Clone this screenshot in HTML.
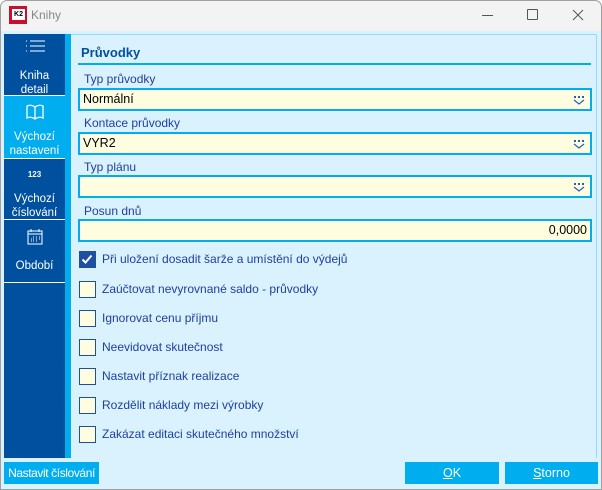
<!DOCTYPE html>
<html><head><meta charset="utf-8"><style>
*{margin:0;padding:0;box-sizing:border-box}
body{width:602px;height:490px;overflow:hidden;background:#fff;font-family:"Liberation Sans",sans-serif;position:relative}
.abs{position:absolute}
#win{left:0;top:0;width:602px;height:490px;background:#d9f2fe;border-radius:7px 7px 0 0;overflow:hidden}
#frame{left:0;top:0;width:602px;height:490px;border:1px solid #a0a0a0;border-radius:7px 7px 0 0;pointer-events:none}
#title{left:0;top:0;width:602px;height:31px;background:#f3f3f3}
.side{left:4px;width:61px;background:#0050a0;color:#fff;font-size:11.5px;text-align:center;line-height:14px}
.lbl{font-size:12px;color:#1f3fa0;left:84px}
.inp{left:78px;width:514px;height:23px;background:#fffde0;border:2px solid #00aeef;font-size:12.5px;color:#000;padding-left:3px;line-height:19px}
.cb{left:79px;width:17px;height:17px;background:#fffde0;border:1.5px solid #1f4f9f}
.ct{left:102px;font-size:12px;color:#1f3fa0}
.dd{right:5px;top:5px}
.btn{top:462px;height:22px;background:#00aeef;color:#fff;font-size:12.5px;line-height:22px;text-align:center;white-space:nowrap;overflow:hidden}
</style></head><body>
<div id="win" class="abs">
<div id="title" class="abs"></div>
<div class="abs" style="left:9px;top:6px;width:18px;height:18px;background:#c8102e"></div>
<div class="abs" style="left:12px;top:9px;width:13px;height:11px;background:#fff;font-size:7px;font-weight:bold;line-height:11px;color:#000;text-align:center">K2</div>
<div class="abs" style="left:31px;top:8px;font-size:12px;color:#888">Knihy</div>
<div class="abs" style="left:482px;top:15px;width:11px;height:1px;background:#555"></div>
<div class="abs" style="left:527px;top:9px;width:11px;height:11px;border:1px solid #555;border-radius:1px"></div>
<svg class="abs" style="left:572px;top:9px" width="12" height="12"><path d="M1 1L11 11M11 1L1 11" stroke="#555" stroke-width="1"/></svg>

<div class="abs side" style="top:34px;height:424px"></div>
<div class="abs side" style="top:34px;height:61px">
<svg width="24" height="16" style="margin-top:5px"><path d="M3 2h1M3 7h1M3 12h1M7 2h15M7 7h15M7 12h15" stroke="#fff" stroke-width="1"/></svg>
<div style="margin-top:10px">Kniha<br>detail</div></div>
<div class="abs" style="left:4px;top:95px;width:61px;height:1px;background:#fff"></div>
<div class="abs side" style="top:96px;height:62px;background:#00aeef">
<svg width="20" height="18" style="margin-top:7px"><path d="M10 4C7 2 4 2 2 3V15C4 14 7 14 10 16C13 14 16 14 18 15V3C16 2 13 2 10 4ZM10 4V16" stroke="#fff" stroke-width="1.3" fill="none"/></svg>
<div style="margin-top:5px">Výchozí<br>nastavení</div></div>
<div class="abs" style="left:4px;top:158px;width:61px;height:1px;background:#fff"></div>
<div class="abs side" style="top:159px;height:60px;background:transparent">
<div style="font-size:8px;font-weight:bold;margin-top:9px">123</div>
<div style="margin-top:10px">Výchozí<br>číslování</div></div>
<div class="abs" style="left:4px;top:219px;width:61px;height:1px;background:#fff"></div>
<div class="abs side" style="top:220px;height:62px;background:transparent">
<svg width="18" height="18" style="margin-top:8px"><rect x="2" y="3" width="14" height="13" stroke="#fff" fill="none"/><path d="M2 6h14M5 1v3M13 1v3" stroke="#fff"/><path d="M7 9h1M10 9h1M13 9h1M5 11h1M7 11h1M10 11h1M13 11h1M5 13h1M7 13h1M10 13h1" stroke="#fff"/></svg>
<div style="margin-top:9px">Období</div></div>
<div class="abs" style="left:4px;top:282px;width:61px;height:1px;background:#fff"></div>
<div class="abs" style="left:65px;top:34px;width:6px;height:424px;background:#00aeef"></div>
<div class="abs" style="left:596px;top:34px;width:1px;height:424px;background:#8fdcfb"></div>
<div class="abs" style="left:71px;top:34px;width:526px;height:1px;background:#8fdcfb"></div>

<div class="abs" style="left:81px;top:45px;font-size:13px;font-weight:bold;color:#0050a0">Průvodky</div>
<div class="abs" style="left:78px;top:63px;width:513px;height:2px;background:#00aeef"></div>

<div class="abs lbl" style="top:72px">Typ průvodky</div>
<div class="abs inp" style="top:88px">Normální<svg class="abs dd" width="12" height="10"><path d="M1 1h2v2h-2zM5 1h2v2h-2zM9 1h2v2h-2z" fill="#1f5fbf"/><path d="M1 5l5 4l5-4" stroke="#1f5fbf" fill="none" stroke-width="1.2"/></svg></div>
<div class="abs lbl" style="top:116px">Kontace průvodky</div>
<div class="abs inp" style="top:132px">VYR2<svg class="abs dd" width="12" height="10"><path d="M1 1h2v2h-2zM5 1h2v2h-2zM9 1h2v2h-2z" fill="#1f5fbf"/><path d="M1 5l5 4l5-4" stroke="#1f5fbf" fill="none" stroke-width="1.2"/></svg></div>
<div class="abs lbl" style="top:160px">Typ plánu</div>
<div class="abs inp" style="top:175px"><svg class="abs dd" width="12" height="10"><path d="M1 1h2v2h-2zM5 1h2v2h-2zM9 1h2v2h-2z" fill="#1f5fbf"/><path d="M1 5l5 4l5-4" stroke="#1f5fbf" fill="none" stroke-width="1.2"/></svg></div>
<div class="abs lbl" style="top:204px">Posun dnů</div>
<div class="abs inp" style="top:219px;text-align:right;padding-right:3px">0,0000</div>

<div class="abs cb" style="top:251px;background:#1f4f9f"><svg width="14" height="14" style="position:absolute;left:0;top:0"><path d="M2.5 7.5l3 3l6-7" stroke="#fff" stroke-width="2" fill="none"/></svg></div>
<div class="abs ct" style="top:252px">Při uložení dosadit šarže a umístění do výdejů</div>
<div class="abs cb" style="top:281px"></div><div class="abs ct" style="top:282px">Zaúčtovat nevyrovnané saldo - průvodky</div>
<div class="abs cb" style="top:310px"></div><div class="abs ct" style="top:311px">Ignorovat cenu příjmu</div>
<div class="abs cb" style="top:339px"></div><div class="abs ct" style="top:340px">Neevidovat skutečnost</div>
<div class="abs cb" style="top:368px"></div><div class="abs ct" style="top:369px">Nastavit příznak realizace</div>
<div class="abs cb" style="top:397px"></div><div class="abs ct" style="top:398px">Rozdělit náklady mezi výrobky</div>
<div class="abs cb" style="top:426px"></div><div class="abs ct" style="top:427px">Zakázat editaci skutečného množství</div>

<div class="abs btn" style="left:4px;width:95px;font-size:12px;letter-spacing:-0.4px">Nastavit číslování</div>
<div class="abs btn" style="left:405px;width:94px"><u>O</u>K</div>
<div class="abs btn" style="left:505px;width:93px"><u>S</u>torno</div>
</div>
<div id="frame" class="abs"></div>
</body></html>
